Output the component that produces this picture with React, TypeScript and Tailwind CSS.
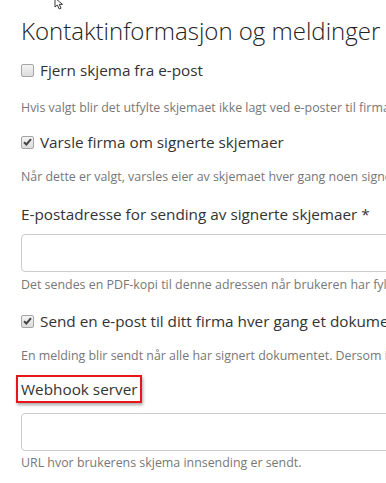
import React from 'react';

function Box({ checked }: { checked?: boolean }) {
  return (
    <span className="relative inline-flex h-[13px] w-[13px] shrink-0 items-center justify-center rounded-[2px] border border-[#a5a5a5] bg-gradient-to-b from-[#f4f4f4] to-[#dcdcdc]">
      {checked && (
        <svg width="9" height="8" viewBox="0 0 9 8">
          <path d="M1 4.2 L3.4 6.5 L8 1.2" fill="none" stroke="#444" strokeWidth="2" />
        </svg>
      )}
    </span>
  );
}

function CheckRow({ label, checked }: { label: string; checked?: boolean }) {
  return (
    <label className="flex items-center gap-[6px] whitespace-nowrap text-[15.3px] leading-[22px] text-[#333]">
      <Box checked={checked} />
      {label}
    </label>
  );
}

function Help({ children }: { children: React.ReactNode }) {
  return <p className="whitespace-nowrap text-[12.4px] leading-[17px] text-[#777]">{children}</p>;
}

function Field() {
  return <div className="h-[38px] w-[500px] rounded-[4px] border border-[#ccc] bg-white" />;
}

export default function App() {
  return (
    <div className="relative h-[483px] w-[386px] overflow-hidden bg-white font-['Open_Sans',sans-serif]">
      {/* mouse pointer */}
      <svg className="absolute left-[54px] top-[-2px]" width="13" height="13" viewBox="0 0 13 13">
        <path d="M1 0 L1 9 L3.4 7 L5.2 11 L7 10.2 L5.3 6.4 L8.5 6.4 Z" fill="#fff" stroke="#222" strokeWidth="0.9" />
      </svg>

      <div className="pl-[21px] pt-[17px]">
        <h2 className="whitespace-nowrap text-[24px] font-light leading-[28px] text-[#222]">
          Kontaktinformasjon og meldinger
        </h2>

        <div className="mt-[14px]">
          <CheckRow label="Fjern skjema fra e-post" />
        </div>
        <div className="mt-[18px]">
          <Help>Hvis valgt blir det utfylte skjemaet ikke lagt ved e-poster til firmaet ditt.</Help>
        </div>

        <div className="mt-[15px]">
          <CheckRow label="Varsle firma om signerte skjemaer" checked />
        </div>
        <div className="mt-[15px]">
          <Help>Når dette er valgt, varsles eier av skjemaet hver gang noen signerer det.</Help>
        </div>

        <div className="mt-[18px] whitespace-nowrap text-[15.3px] leading-[22px] text-[#333]">
          E-postadresse for sending av signerte skjemaer *
        </div>
        <div className="mt-[9px]">
          <Field />
        </div>
        <div className="mt-[4px]">
          <Help>Det sendes en PDF-kopi til denne adressen når brukeren har fylt ut skjemaet.</Help>
        </div>

        <div className="mt-[17px]">
          <CheckRow label="Send en e-post til ditt firma hver gang et dokument er signert" checked />
        </div>
        <div className="mt-[15px]">
          <Help>En melding blir sendt når alle har signert dokumentet. Dersom ingen signerer, sendes ingen melding.</Help>
        </div>

        <div className="ml-[-5px] mt-[11px] inline-block border-2 border-[#e8161b] px-[3px] py-[1px] text-[15.3px] leading-[22px] text-[#333] shadow-[1px_2px_3px_rgba(0,0,0,0.35)]">
          Webhook server
        </div>
        <div className="mt-[10px]">
          <Field />
        </div>
        <div className="mt-[3px]">
          <Help>URL hvor brukerens skjema innsending er sendt.</Help>
        </div>
      </div>
    </div>
  );
}
